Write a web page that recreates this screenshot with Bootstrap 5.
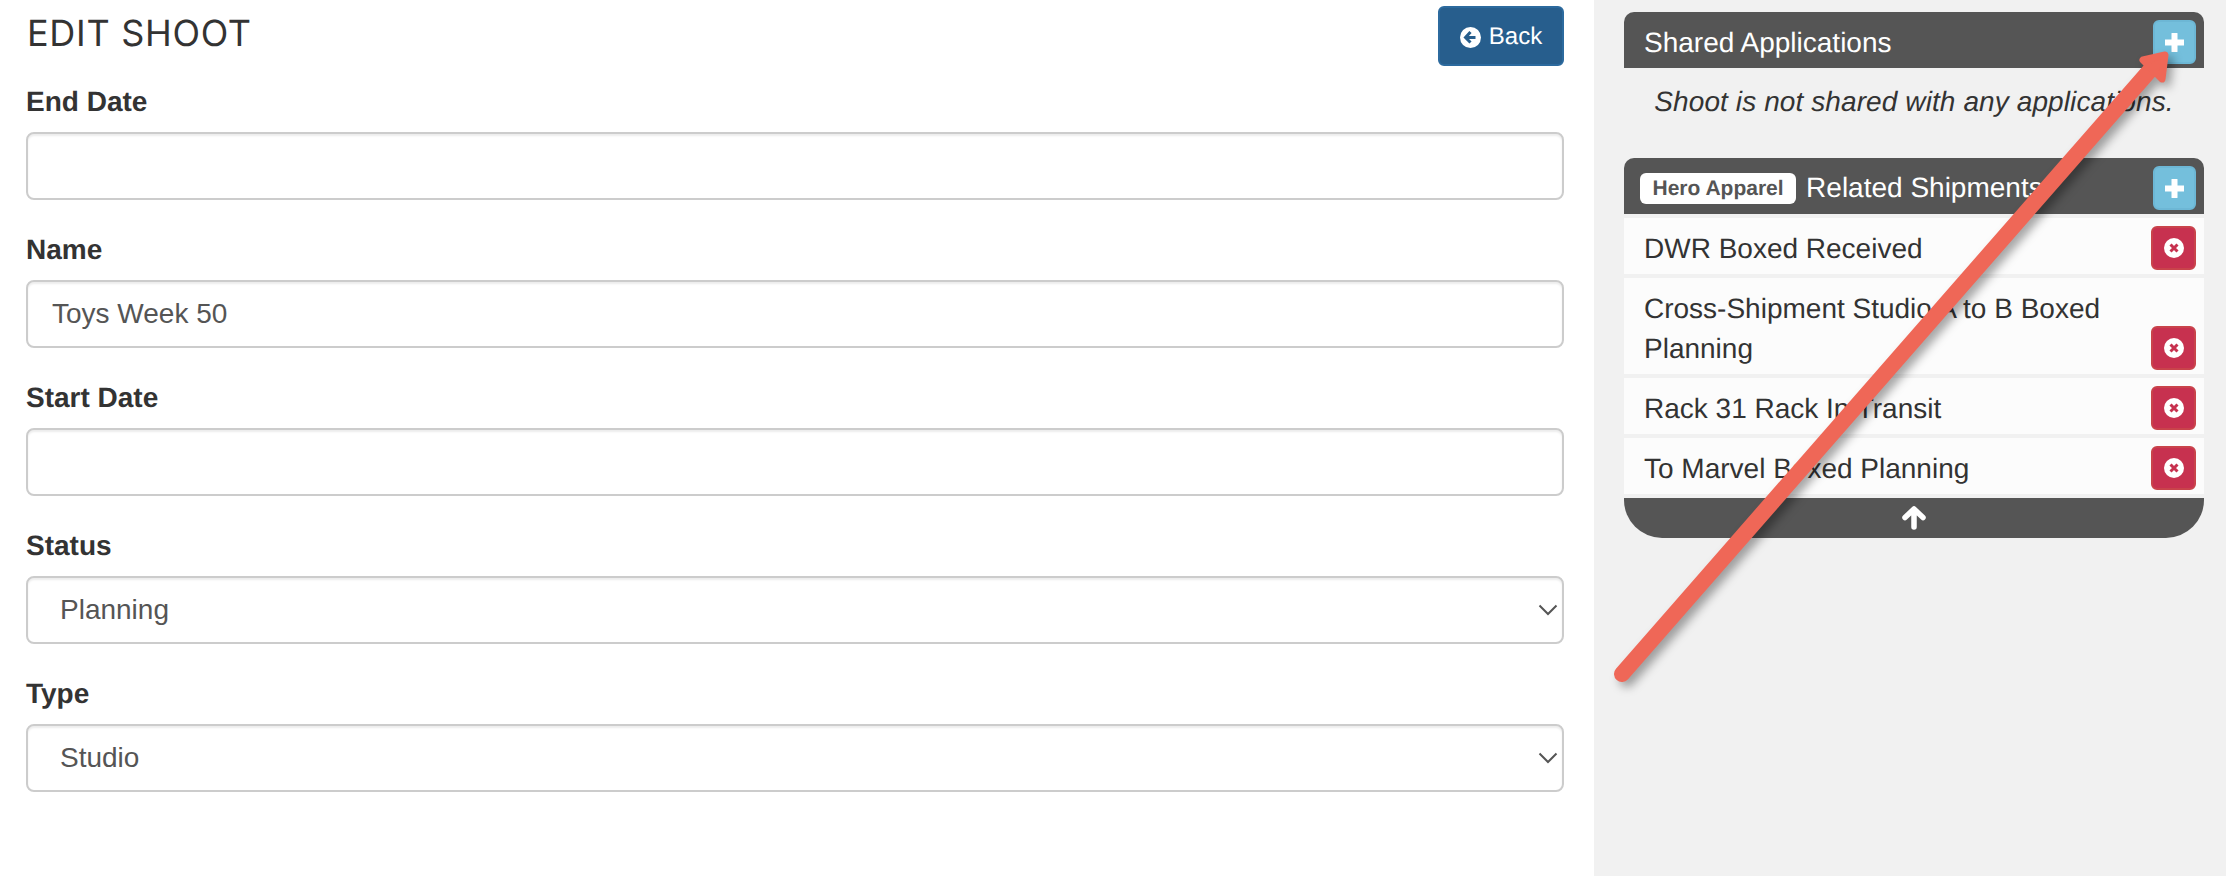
<!DOCTYPE html>
<html lang="en">
<head>
  <meta charset="UTF-8">
  <meta name="viewport" content="width=device-width, initial-scale=1.0">
  <title>Edit Shoot</title>
  <link href="https://cdn.jsdelivr.net/npm/bootstrap@5.3.0/dist/css/bootstrap.min.css" rel="stylesheet">
  <style>
    body {
      font-family: "Liberation Sans", Arial, sans-serif;
      font-size: 28px;
      line-height: 40px;
      color: #333;
      background: #fff;
      text-rendering: geometricPrecision;
    }

    .page-wrap { min-height: 876px; }

    /* left form column */
    .form-side {
      width: 1594px;
      flex: none;
      padding: 6px 30px 0 26px;
    }
    .title-row { margin-bottom: 16px; }
    .shoot-title {
      font-family: Inter, sans-serif;
      font-weight: 400;
      font-size: 36px;
      line-height: 54px;
      letter-spacing: .7px;
      color: #333;
      margin: 0 0 0 1px;
    }
    .back-btn {
      width: 126px;
      height: 60px;
      padding: 2px 0 0;
      font-size: 24px;
      color: #fff;
      background: #275e8d;
      border: 2px solid #2c6a9e;
      border-radius: 6px;
    }
    .field-wrap { margin-bottom: 30px; }
    .field-label {
      display: block;
      font-weight: 700;
      margin-bottom: 10px;
    }
    .form-control.shoot-field, .form-select.shoot-field {
      height: 68px;
      font-size: 28px;
      line-height: 40px;
      color: #555;
      border: 2px solid #ccc;
      border-radius: 8px;
      box-shadow: inset 0 2px 2px rgba(0, 0, 0, .075);
      padding: 0 24px;
    }
    .form-select.shoot-field {
      padding-left: 32px;
      background-image: url("data:image/svg+xml,%3csvg xmlns='http://www.w3.org/2000/svg' viewBox='0 0 24 24'%3e%3cpath fill='none' stroke='%23555' stroke-width='2' d='M3.5 7.5l8.5 8.5 8.5-8.5'/%3e%3c/svg%3e");
      background-size: 24px 24px;
      background-position: right 2px center;
    }

    /* right column */
    .side-col {
      flex: 1;
      background: #f1f1f1;
      padding: 12px 22px 0 30px;
    }
    .panel-head {
      height: 56px;
      padding: 8px 8px 4px 20px;
      background: #555;
      color: #fff;
      border-radius: 10px 10px 0 0;
    }
    .head-text { padding-top: 2px; }
    .add-btn {
      width: 43px;
      height: 44px;
      padding: 0;
      background: #74bfdc;
      border: 2px solid #6db7d5;
      border-radius: 6px;
    }
    .empty-note {
      font-style: italic;
      text-align: center;
      padding: 14px 0 36px;
      margin: 0;
      letter-spacing: .1px;
    }
    .client-tag {
      font-size: 21px;
      font-weight: 700;
      line-height: 31px;
      padding: 0 12.5px;
      background: #fff;
      color: #555;
      border-radius: 6px;
      margin-left: -4px;
      margin-right: 10px;
    }
    .list-group .ship-row {
      background: #fcfcfc;
      border: 0;
      border-radius: 0;
      padding: 8px 8px 4px 20px;
      color: #333;
    }
    .ship-name { padding: 3px 12px 1px 0; }
    .del-btn {
      width: 45px;
      height: 44px;
      flex: none;
      padding: 0;
      background: #c7314f;
      border: 2px solid #c9434b;
      border-radius: 6px;
    }
    .panel-foot {
      height: 40px;
      margin-top: 4px;
      background: #555;
      border-radius: 0 0 38px 38px;
    }

    .arrow-layer {
      position: absolute;
      left: 0;
      top: 0;
      pointer-events: none;
    }
    .arrow-layer g { filter: drop-shadow(5px 5px 5px rgba(0, 0, 0, .35)); }
    .btn svg { display: block; }
  </style>
</head>
<body>
  <div class="page-wrap d-flex">
    <div class="form-side">
      <div class="title-row d-flex justify-content-between align-items-start">
        <h1 class="shoot-title">EDIT SHOOT</h1>
        <a href="#" class="btn back-btn d-flex align-items-center justify-content-center gap-2">
          <svg width="21" height="21" viewBox="0 0 21 21"><circle cx="10.5" cy="10.5" r="10.5" fill="#fff"/><path d="M10.5 5l-5 5.5 5 5M6 10.5h9.5" fill="none" stroke="#275e8d" stroke-width="3"/></svg>
          Back
        </a>
      </div>

      <form>
        <div class="field-wrap">
          <label class="field-label">End Date</label>
          <input type="text" class="form-control shoot-field">
        </div>
        <div class="field-wrap">
          <label class="field-label">Name</label>
          <input type="text" class="form-control shoot-field" value="Toys Week 50">
        </div>
        <div class="field-wrap">
          <label class="field-label">Start Date</label>
          <input type="text" class="form-control shoot-field">
        </div>
        <div class="field-wrap">
          <label class="field-label">Status</label>
          <select class="form-select shoot-field"><option>Planning</option></select>
        </div>
        <div class="field-wrap">
          <label class="field-label">Type</label>
          <select class="form-select shoot-field"><option>Studio</option></select>
        </div>
      </form>
    </div>

    <div class="side-col">
      <div class="panel-head d-flex justify-content-between align-items-center">
        <span class="head-text">Shared Applications</span>
        <button class="btn add-btn d-flex align-items-center justify-content-center">
          <svg width="19" height="19" viewBox="0 0 19 19"><path d="M9.5 1v17M1 9.5h17" stroke="#fff" stroke-width="6" stroke-linecap="round"/></svg>
        </button>
      </div>
      <p class="empty-note">Shoot is not shared with any applications.</p>

      <div class="panel-head d-flex justify-content-between align-items-center">
        <span class="d-flex align-items-center"><span class="client-tag">Hero Apparel</span>Related Shipments</span>
        <button class="btn add-btn d-flex align-items-center justify-content-center">
          <svg width="19" height="19" viewBox="0 0 19 19"><path d="M9.5 1v17M1 9.5h17" stroke="#fff" stroke-width="6" stroke-linecap="round"/></svg>
        </button>
      </div>
      <ul class="list-group gap-1 mt-1">
        <li class="list-group-item ship-row d-flex justify-content-between align-items-end">
          <span class="ship-name">DWR Boxed Received</span>
          <button class="btn del-btn d-flex align-items-center justify-content-center">
            <svg width="20" height="20" viewBox="0 0 20 20"><circle cx="10" cy="10" r="10" fill="#fff"/><path d="M6.5 6.5l7 7M13.5 6.5l-7 7" stroke="#c7314f" stroke-width="3"/></svg>
          </button>
        </li>
        <li class="list-group-item ship-row d-flex justify-content-between align-items-end">
          <span class="ship-name">Cross-Shipment Studio A to B Boxed Planning</span>
          <button class="btn del-btn d-flex align-items-center justify-content-center">
            <svg width="20" height="20" viewBox="0 0 20 20"><circle cx="10" cy="10" r="10" fill="#fff"/><path d="M6.5 6.5l7 7M13.5 6.5l-7 7" stroke="#c7314f" stroke-width="3"/></svg>
          </button>
        </li>
        <li class="list-group-item ship-row d-flex justify-content-between align-items-end">
          <span class="ship-name">Rack 31 Rack In Transit</span>
          <button class="btn del-btn d-flex align-items-center justify-content-center">
            <svg width="20" height="20" viewBox="0 0 20 20"><circle cx="10" cy="10" r="10" fill="#fff"/><path d="M6.5 6.5l7 7M13.5 6.5l-7 7" stroke="#c7314f" stroke-width="3"/></svg>
          </button>
        </li>
        <li class="list-group-item ship-row d-flex justify-content-between align-items-end">
          <span class="ship-name">To Marvel Boxed Planning</span>
          <button class="btn del-btn d-flex align-items-center justify-content-center">
            <svg width="20" height="20" viewBox="0 0 20 20"><circle cx="10" cy="10" r="10" fill="#fff"/><path d="M6.5 6.5l7 7M13.5 6.5l-7 7" stroke="#c7314f" stroke-width="3"/></svg>
          </button>
        </li>
      </ul>
      <div class="panel-foot d-flex align-items-center justify-content-center">
        <svg width="24" height="24" viewBox="0 0 24 24"><path d="M12 21V4M3 11.5L12 3l9 8.5" fill="none" stroke="#fff" stroke-width="5.5" stroke-linecap="round" stroke-linejoin="round"/></svg>
      </div>
    </div>
  </div>

  <!-- annotation arrow drawn over the screenshot -->
  <svg class="arrow-layer" width="2226" height="876" viewBox="0 0 2226 876">
    <g>
      <path d="M1622 674L2152 68" stroke="#ef6757" stroke-width="16" stroke-linecap="round"/>
      <path d="M2143 60L2165 55L2162 79Z" fill="#ef6757" stroke="#ef6757" stroke-width="7" stroke-linejoin="round"/>
    </g>
  </svg>

  <script src="https://cdn.jsdelivr.net/npm/bootstrap@5.3.0/dist/js/bootstrap.bundle.min.js"></script>
</body>
</html>
